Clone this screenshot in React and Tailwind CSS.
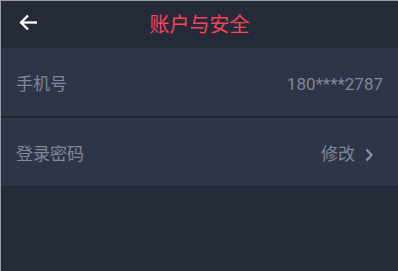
const font = {
  fontFamily: 'Roboto, "Noto Sans CJK SC", "Noto Sans", sans-serif',
};

/* ── Settings row ── */
function Row({ label, value, arrow }) {
  return (
    <div
      className={`flex h-[68px] items-center justify-between bg-[#2e3547] pt-[5px] pl-[15px] ${
        arrow ? "pr-[25px]" : "pr-[15px]"
      }`}
    >
      <span className="text-[17px] text-[#7f8799]">{label}</span>
      <div className="flex items-center gap-[10px]">
        <span className="text-[17px] text-[#7f8799]">{value}</span>
        {arrow && (
          <svg
            width="8"
            height="14"
            viewBox="0 0 8 14"
            fill="none"
            stroke="#8a91a3"
            strokeWidth="2.2"
          >
            <path d="M1.5 1.5L6.5 7l-5 5.5" />
          </svg>
        )}
      </div>
    </div>
  );
}

export default function App() {
  return (
    <div
      className="h-[271px] w-[398px] overflow-hidden border-l border-t border-[#9a9da4] bg-[#242a37]"
      style={font}
    >
      {/* ── Header ── */}
      <div className="relative flex h-[47px] items-center justify-center">
        <svg
          className="absolute left-[17px] top-[12px]"
          width="20"
          height="19"
          viewBox="0 0 20 19"
          fill="none"
          stroke="#ffffff"
          strokeWidth="2.3"
        >
          <path d="M19 9.5H3" />
          <path d="M10 2.5L3 9.5l7 7" />
        </svg>
        <span className="text-[20px] text-[#f2435c]">账户与安全</span>
      </div>

      <Row label="手机号" value="180****2787" />
      <div className="h-[2px] bg-[#22262f]" />
      <Row label="登录密码" value="修改" arrow />
    </div>
  );
}
